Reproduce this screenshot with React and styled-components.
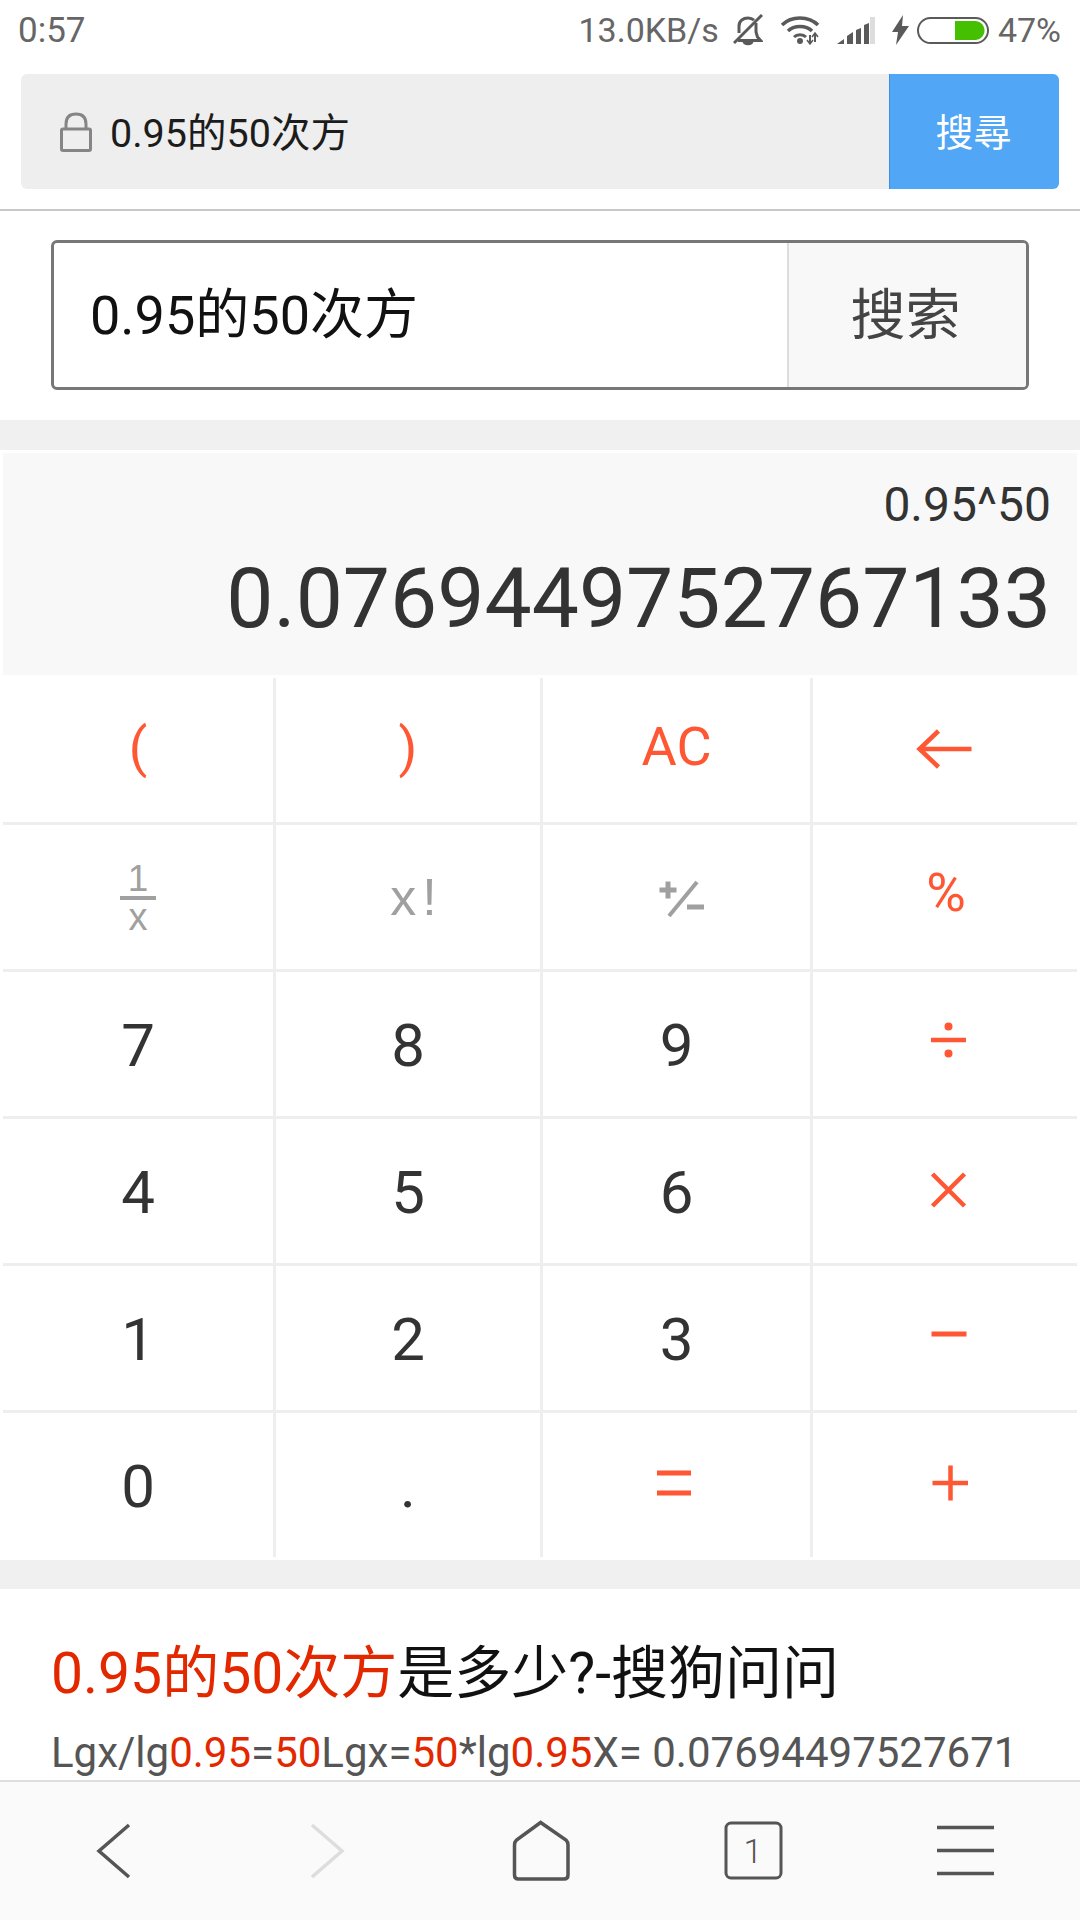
import styled, { createGlobalStyle } from "styled-components";

const SANS = `Roboto, "Noto Sans CJK SC", sans-serif`;
const ORANGE = "#ff5733";
const GREY = "#a0a0a0";

const GlobalStyle = createGlobalStyle`
  html, body {
    margin: 0;
    padding: 0;
    background: #fff;
  }
  body {
    font-family: ${SANS};
  }
`;

const Page = styled.div`
  width: 1080px;
  height: 1920px;
  display: flex;
  flex-direction: column;
  overflow: hidden;
  background: #fff;
`;

/* status bar */
const StatusBar = styled.div`
  padding: 0 19px 14px 18px;
  box-sizing: border-box;
  height: 74px;
  display: flex;
  align-items: center;
  justify-content: space-between;
  color: #666;
  font-size: 34px;
  line-height: 1;
`;

const Clock = styled.span`
  font-size: 35px;
`;

const StatusRight = styled.div`
  display: flex;
  align-items: center;
`;

const Speed = styled.span`
  margin-right: 14px;
`;

const StatusIcon = styled.svg`
  display: block;
  margin-right: ${({ $gap }) => $gap}px;
`;

const Percent = styled.span`
  margin-left: 9px;
`;

/* browser address bar */
const AddressRow = styled.div`
  padding: 0 21px 20px;
  border-bottom: 2px solid #c8c8c8;
`;

const AddressBar = styled.div`
  height: 115px;
  display: flex;
  align-items: center;
  background: #eee;
  border-radius: 6px;
  overflow: hidden;
`;

const AddressText = styled.div`
  flex: 1;
  display: flex;
  align-items: center;
  gap: 18px;
  padding-left: 39px;
  color: #1c1c1c;
  font-size: 39.500px;
`;

const AddressLabel = styled.span`
  padding-bottom: 4px;
`;

const AddressButton = styled.div`
  width: 170px;
  height: 100%;
  display: flex;
  align-items: center;
  justify-content: center;
  box-sizing: border-box;
  padding: 0 2px 4px 0;
  border-left: 1px solid #3d8fe0;
  background: #51a6f5;
  color: #fff;
  font-size: 38px;
`;

/* search form of the page */
const SearchWrap = styled.div`
  padding: 29px 51px 30px;
`;

const SearchBox = styled.div`
  height: 150px;
  box-sizing: border-box;
  display: flex;
  border: 3px solid #777;
  border-radius: 6px;
  overflow: hidden;
`;

const SearchText = styled.div`
  flex: 1;
  display: flex;
  align-items: center;
  padding: 0 0 10px 36px;
  color: #111;
  font-size: 54px;
`;

const SearchButton = styled.div`
  width: 239px;
  display: flex;
  align-items: center;
  justify-content: center;
  box-sizing: border-box;
  padding: 0 4px 10px 0;
  border-left: 2px solid #ddd;
  background: #f8f8f8;
  color: #444;
  font-size: 55px;
`;

const Band = styled.div`
  height: ${({ $h }) => $h}px;
  flex: none;
  background: #f0f0f0;
`;

/* calculator */
const Calculator = styled.div`
  padding: 3px 3px 0;
`;

const Result = styled.div`
  height: 222px;
  box-sizing: border-box;
  padding: 24px 26px 0 0;
  display: flex;
  flex-direction: column;
  align-items: flex-end;
  background: #f8f8f8;
  color: #333;
`;

const Expression = styled.div`
  font-size: 48px;
  line-height: 56px;
`;

const Value = styled.div`
  font-size: 84px;
  line-height: 100px;
  margin-top: 16px;
`;

const Keypad = styled.div`
  margin-top: 3px;
  display: grid;
  grid-template-columns: 270px 264px 267px 264px;
  grid-auto-rows: 144px;
  gap: 3px;
  padding-bottom: 3px;
  background: linear-gradient(#eee, #eee) 0 0 / 100% calc(100% - 6px) no-repeat,
    linear-gradient(#eee, #eee) 270px 0 / 3px calc(100% - 3px) no-repeat,
    linear-gradient(#eee, #eee) 537px 0 / 3px calc(100% - 3px) no-repeat,
    linear-gradient(#eee, #eee) 807px 0 / 3px calc(100% - 3px) no-repeat;
`;

const Key = styled.div`
  display: flex;
  align-items: center;
  justify-content: center;
  box-sizing: border-box;
  background: #fff;
  font-size: 60px;
  line-height: 1;
  color: ${({ $tone }) =>
    $tone === "accent" ? ORANGE : $tone === "muted" ? GREY : "#333"};
`;

const DigitKey = styled(Key)`
  padding-top: 3px;
`;

const ParenKey = styled(Key)`
  font-size: 54px;
  padding-bottom: 4px;
`;

const WordKey = styled(Key)`
  font-size: 54px;
  padding-bottom: 6px;
`;

const PercentKey = styled(Key)`
  font-size: 54px;
  padding: 0 0 8px 2px;
`;

const Fraction = styled.div`
  display: flex;
  flex-direction: column;
  align-items: center;
  font-family: "Liberation Sans", sans-serif;
`;

const FractionTop = styled.span`
  font-size: 37px;
  line-height: 28px;
`;

const FractionBar = styled.span`
  width: 36px;
  height: 4px;
  margin: 3px 0 4px;
  background: ${GREY};
`;

const FractionBottom = styled.span`
  font-size: 38px;
  line-height: 26px;
`;

const Factorial = styled.div`
  padding-left: 17px;
  font-family: "Liberation Sans", sans-serif;
  font-size: 52px;
  letter-spacing: 6px;
`;

/* search result */
const Article = styled.div`
  flex: 1;
  min-height: 0;
  padding: 50px 0 0 51px;
  overflow: hidden;
`;

const ArticleTitle = styled.div`
  font-size: 57px;
  line-height: 70px;
  color: #111;
  white-space: nowrap;
`;

const ArticleText = styled.div`
  margin-top: 19px;
  font-size: 42px;
  line-height: 50px;
  color: #555;
  white-space: nowrap;
`;

const Hit = styled.span`
  color: #e32800;
`;

/* browser bottom nav */
const BottomNav = styled.div`
  height: 140px;
  flex: none;
  box-sizing: border-box;
  display: grid;
  grid-template-columns: repeat(5, 1fr);
  align-items: center;
  justify-items: center;
  border-top: 2px solid #ddd;
  background: #fafafa;
`;

const BellOff = () => (
  <StatusIcon $gap={18} width="30" height="32" viewBox="0 0 30 32" fill="none" stroke="#5a5a5a" strokeWidth="3">
    <path d="M6 19V12C6 7 10 4 15 4c2.500 0 4.500 .8 6 2.200M23 9v9l1.500 5 3 3.500H5" />
    <path d="M1 29 29 1" />
    <path d="M10.500 27.500c.6 3.500 8.400 3.500 9 0z" fill="#5a5a5a" strokeWidth="2" />
  </StatusIcon>
);

const Wifi = () => (
  <StatusIcon $gap={17} width="39" height="30" viewBox="0 0 39 30" fill="none" stroke="#5a5a5a" strokeWidth="3.500">
    <path d="M1 10C10 .5 28 .5 37 10" />
    <path d="M7 16c6-6 18-6 24 0" />
    <path d="M13 22c3-3 9-3 12 0" strokeWidth="3" />
    <circle cx="19" cy="26" r="3" fill="#5a5a5a" stroke="none" />
    <path d="M29 20v9M34 18v9" strokeWidth="2" />
    <path d="M26 25l3 4 3-4M31 22l3-4 3 4" strokeWidth="1.500" />
  </StatusIcon>
);

const Signal = () => (
  <StatusIcon $gap={17} width="38" height="27" viewBox="0 0 38 27">
    <path d="M0 27 7 22v5zM10 19l6-4v12h-6zM19 13l5-2v16h-5zM27 8l5-2v21h-5z" fill="#5a5a5a" />
    <rect x="33" y="0" width="5" height="27" fill="#ddd" />
  </StatusIcon>
);

const Bolt = () => (
  <StatusIcon $gap={8} width="17" height="30" viewBox="0 0 17 30">
    <path d="M11 0 0 17h6L4 30 17 11h-7z" fill="#5a5a5a" />
  </StatusIcon>
);

const Battery = () => (
  <StatusIcon $gap={0} width="72" height="27" viewBox="0 0 72 27">
    <rect x="1" y="1" width="70" height="25" rx="12.5" fill="#fff" stroke="#5a5a5a" strokeWidth="2" />
    <path d="M38 4h20c5 0 9.500 4 9.500 9.500S63 23 58 23H38z" fill="#44c000" />
  </StatusIcon>
);

const Lock = () => (
  <svg width="32" height="40" viewBox="0 0 32 40" fill="none" stroke="#858585">
    <path d="M6 17V12C6 5 10 2 16 2s10 3 10 10v5" strokeWidth="3" />
    <rect x="1.500" y="17" width="29" height="21.500" rx="1.500" strokeWidth="3" />
  </svg>
);

const OpIcon = ({ children, stroke = ORANGE }) => (
  <svg width="60" height="60" viewBox="0 0 60 60" fill="none" stroke={stroke} strokeWidth="5">
    {children}
  </svg>
);

const NavIcon = ({ children, stroke = "#555" }) => (
  <svg width="72" height="72" viewBox="0 0 72 72" fill="none" stroke={stroke} strokeWidth="3.500">
    {children}
  </svg>
);

const keys = [
  { label: "(", tone: "accent", Comp: ParenKey },
  { label: ")", tone: "accent", Comp: ParenKey },
  { label: "AC", tone: "accent", Comp: WordKey },
  {
    tone: "accent",
    icon: (
      <OpIcon>
        <path d="M56.500 29H4M23.500 11 4.500 29l19 18" strokeWidth="4.500" />
      </OpIcon>
    ),
  },
  {
    tone: "muted",
    icon: (
      <Fraction>
        <FractionTop>1</FractionTop>
        <FractionBar />
        <FractionBottom>x</FractionBottom>
      </Fraction>
    ),
  },
  { tone: "muted", icon: <Factorial>x!</Factorial> },
  {
    tone: "muted",
    icon: (
      <OpIcon stroke={GREY}>
        <path d="M12.500 23h17M21 14.500v17M40 40h17" strokeWidth="5" />
        <path d="M50 15 22 49" strokeWidth="4" />
      </OpIcon>
    ),
  },
  { label: "%", tone: "accent", Comp: PercentKey },
  { label: "7", Comp: DigitKey },
  { label: "8", Comp: DigitKey },
  { label: "9", Comp: DigitKey },
  {
    tone: "accent",
    icon: (
      <OpIcon>
        <path d="M16 26h35" strokeWidth="4.500" />
        <circle cx="33.500" cy="12.500" r="4" fill={ORANGE} stroke="none" />
        <circle cx="33.500" cy="39.500" r="4" fill={ORANGE} stroke="none" />
      </OpIcon>
    ),
  },
  { label: "4", Comp: DigitKey },
  { label: "5", Comp: DigitKey },
  { label: "6", Comp: DigitKey },
  {
    tone: "accent",
    icon: (
      <OpIcon>
        <path d="M17.500 13 49.500 45M49.500 13 17.500 45" strokeWidth="4.500" />
      </OpIcon>
    ),
  },
  { label: "1", Comp: DigitKey },
  { label: "2", Comp: DigitKey },
  { label: "3", Comp: DigitKey },
  {
    tone: "accent",
    icon: (
      <OpIcon>
        <path d="M16.500 26h35" />
      </OpIcon>
    ),
  },
  { label: "0", Comp: DigitKey },
  { label: ".", Comp: DigitKey },
  {
    tone: "accent",
    icon: (
      <OpIcon>
        <path d="M10 18h34M10 38h34" />
      </OpIcon>
    ),
  },
  {
    tone: "accent",
    icon: (
      <OpIcon>
        <path d="M17.500 28h35.500M35.500 10.500V45.500" strokeWidth="4.500" />
      </OpIcon>
    ),
  },
];

export default function App() {
  return (
    <Page>
      <GlobalStyle />
      <StatusBar>
        <Clock>0:57</Clock>
        <StatusRight>
          <Speed>13.0KB/s</Speed>
          <BellOff />
          <Wifi />
          <Signal />
          <Bolt />
          <Battery />
          <Percent>47%</Percent>
        </StatusRight>
      </StatusBar>

      <AddressRow>
        <AddressBar>
          <AddressText>
            <Lock />
            <AddressLabel>0.95的50次方</AddressLabel>
          </AddressText>
          <AddressButton>搜尋</AddressButton>
        </AddressBar>
      </AddressRow>

      <SearchWrap>
        <SearchBox>
          <SearchText>0.95的50次方</SearchText>
          <SearchButton>搜索</SearchButton>
        </SearchBox>
      </SearchWrap>

      <Band $h={30} />

      <Calculator>
        <Result>
          <Expression>0.95^50</Expression>
          <Value>0.0769449752767133</Value>
        </Result>
        <Keypad>
          {keys.map(({ label, tone, icon, Comp = Key }, i) => (
            <Comp key={i} $tone={tone}>
              {icon || label}
            </Comp>
          ))}
        </Keypad>
      </Calculator>

      <Band $h={29} />

      <Article>
        <ArticleTitle>
          <Hit>0.95的50次方</Hit>是多少?-搜狗问问
        </ArticleTitle>
        <ArticleText>
          Lgx/lg<Hit>0.95</Hit>=<Hit>50</Hit>Lgx=<Hit>50</Hit>*lg<Hit>0.95</Hit>X= 0.07694497527671
        </ArticleText>
      </Article>

      <BottomNav>
        <NavIcon>
          <path d="M57 10 27 36l30 26" />
        </NavIcon>
        <NavIcon stroke="#ddd">
          <path d="M24 10 54 36 24 62" />
        </NavIcon>
        <NavIcon>
          <path d="M36.600 7.500 12.500 25Q10.500 27 10.500 30V60Q10.500 64 14.500 64H60Q64 64 64 60V30Q64 27 62 25Z" />
        </NavIcon>
        <svg width="72" height="72" viewBox="0 0 72 72" fill="none" stroke="#555" strokeWidth="3">
          <rect x="6" y="8" width="55" height="55" rx="5" />
          <text x="33" y="48" fill="#555" stroke="none" fontSize="34" fontWeight="300" textAnchor="middle" fontFamily="Roboto, sans-serif">1</text>
        </svg>
        <NavIcon>
          <path d="M1 12.500h57M1 35.500h57M1 58.500h57" />
        </NavIcon>
      </BottomNav>
    </Page>
  );
}
